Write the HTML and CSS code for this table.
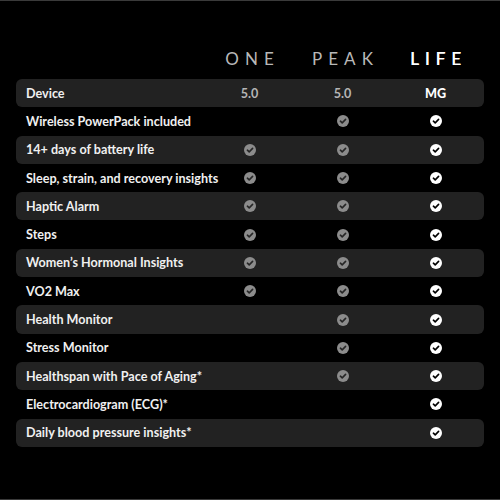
FILE: index.html
```html
<!DOCTYPE html>
<html>
<head>
<meta charset="utf-8">
<link rel="stylesheet" href="styles.css">
</head>
<body>
<div class="page">
  <div class="head">
    <div></div>
    <div class="brand">ONE</div>
    <div class="brand">PEAK</div>
    <div class="brand life">LIFE</div>
  </div>
  <div class="table">
    <div class="row shade"><div class="label">Device</div><div class="val">5.0</div><div class="val">5.0</div><div class="val mg">MG</div></div>
    <div class="row"><div class="label">Wireless PowerPack included</div><div class="cell"></div><div class="cell"><svg class="ck g" viewBox="0 0 12 12"><circle cx="6" cy="6" r="6"/><path d="M3.4 6.2 L5.2 7.9 L8.6 4.4"/></svg></div><div class="cell"><svg class="ck w" viewBox="0 0 12 12"><circle cx="6" cy="6" r="6"/><path d="M3.4 6.2 L5.2 7.9 L8.6 4.4"/></svg></div></div>
    <div class="row shade"><div class="label">14+ days of battery life</div><div class="cell"><svg class="ck g" viewBox="0 0 12 12"><circle cx="6" cy="6" r="6"/><path d="M3.4 6.2 L5.2 7.9 L8.6 4.4"/></svg></div><div class="cell"><svg class="ck g" viewBox="0 0 12 12"><circle cx="6" cy="6" r="6"/><path d="M3.4 6.2 L5.2 7.9 L8.6 4.4"/></svg></div><div class="cell"><svg class="ck w" viewBox="0 0 12 12"><circle cx="6" cy="6" r="6"/><path d="M3.4 6.2 L5.2 7.9 L8.6 4.4"/></svg></div></div>
    <div class="row"><div class="label">Sleep, strain, and recovery insights</div><div class="cell"><svg class="ck g" viewBox="0 0 12 12"><circle cx="6" cy="6" r="6"/><path d="M3.4 6.2 L5.2 7.9 L8.6 4.4"/></svg></div><div class="cell"><svg class="ck g" viewBox="0 0 12 12"><circle cx="6" cy="6" r="6"/><path d="M3.4 6.2 L5.2 7.9 L8.6 4.4"/></svg></div><div class="cell"><svg class="ck w" viewBox="0 0 12 12"><circle cx="6" cy="6" r="6"/><path d="M3.4 6.2 L5.2 7.9 L8.6 4.4"/></svg></div></div>
    <div class="row shade"><div class="label">Haptic Alarm</div><div class="cell"><svg class="ck g" viewBox="0 0 12 12"><circle cx="6" cy="6" r="6"/><path d="M3.4 6.2 L5.2 7.9 L8.6 4.4"/></svg></div><div class="cell"><svg class="ck g" viewBox="0 0 12 12"><circle cx="6" cy="6" r="6"/><path d="M3.4 6.2 L5.2 7.9 L8.6 4.4"/></svg></div><div class="cell"><svg class="ck w" viewBox="0 0 12 12"><circle cx="6" cy="6" r="6"/><path d="M3.4 6.2 L5.2 7.9 L8.6 4.4"/></svg></div></div>
    <div class="row"><div class="label">Steps</div><div class="cell"><svg class="ck g" viewBox="0 0 12 12"><circle cx="6" cy="6" r="6"/><path d="M3.4 6.2 L5.2 7.9 L8.6 4.4"/></svg></div><div class="cell"><svg class="ck g" viewBox="0 0 12 12"><circle cx="6" cy="6" r="6"/><path d="M3.4 6.2 L5.2 7.9 L8.6 4.4"/></svg></div><div class="cell"><svg class="ck w" viewBox="0 0 12 12"><circle cx="6" cy="6" r="6"/><path d="M3.4 6.2 L5.2 7.9 L8.6 4.4"/></svg></div></div>
    <div class="row shade"><div class="label">Women’s Hormonal Insights</div><div class="cell"><svg class="ck g" viewBox="0 0 12 12"><circle cx="6" cy="6" r="6"/><path d="M3.4 6.2 L5.2 7.9 L8.6 4.4"/></svg></div><div class="cell"><svg class="ck g" viewBox="0 0 12 12"><circle cx="6" cy="6" r="6"/><path d="M3.4 6.2 L5.2 7.9 L8.6 4.4"/></svg></div><div class="cell"><svg class="ck w" viewBox="0 0 12 12"><circle cx="6" cy="6" r="6"/><path d="M3.4 6.2 L5.2 7.9 L8.6 4.4"/></svg></div></div>
    <div class="row"><div class="label">VO2 Max</div><div class="cell"><svg class="ck g" viewBox="0 0 12 12"><circle cx="6" cy="6" r="6"/><path d="M3.4 6.2 L5.2 7.9 L8.6 4.4"/></svg></div><div class="cell"><svg class="ck g" viewBox="0 0 12 12"><circle cx="6" cy="6" r="6"/><path d="M3.4 6.2 L5.2 7.9 L8.6 4.4"/></svg></div><div class="cell"><svg class="ck w" viewBox="0 0 12 12"><circle cx="6" cy="6" r="6"/><path d="M3.4 6.2 L5.2 7.9 L8.6 4.4"/></svg></div></div>
    <div class="row shade"><div class="label">Health Monitor</div><div class="cell"></div><div class="cell"><svg class="ck g" viewBox="0 0 12 12"><circle cx="6" cy="6" r="6"/><path d="M3.4 6.2 L5.2 7.9 L8.6 4.4"/></svg></div><div class="cell"><svg class="ck w" viewBox="0 0 12 12"><circle cx="6" cy="6" r="6"/><path d="M3.4 6.2 L5.2 7.9 L8.6 4.4"/></svg></div></div>
    <div class="row"><div class="label">Stress Monitor</div><div class="cell"></div><div class="cell"><svg class="ck g" viewBox="0 0 12 12"><circle cx="6" cy="6" r="6"/><path d="M3.4 6.2 L5.2 7.9 L8.6 4.4"/></svg></div><div class="cell"><svg class="ck w" viewBox="0 0 12 12"><circle cx="6" cy="6" r="6"/><path d="M3.4 6.2 L5.2 7.9 L8.6 4.4"/></svg></div></div>
    <div class="row shade"><div class="label">Healthspan with Pace of Aging*</div><div class="cell"></div><div class="cell"><svg class="ck g" viewBox="0 0 12 12"><circle cx="6" cy="6" r="6"/><path d="M3.4 6.2 L5.2 7.9 L8.6 4.4"/></svg></div><div class="cell"><svg class="ck w" viewBox="0 0 12 12"><circle cx="6" cy="6" r="6"/><path d="M3.4 6.2 L5.2 7.9 L8.6 4.4"/></svg></div></div>
    <div class="row"><div class="label">Electrocardiogram (ECG)*</div><div class="cell"></div><div class="cell"></div><div class="cell"><svg class="ck w" viewBox="0 0 12 12"><circle cx="6" cy="6" r="6"/><path d="M3.4 6.2 L5.2 7.9 L8.6 4.4"/></svg></div></div>
    <div class="row shade"><div class="label">Daily blood pressure insights*</div><div class="cell"></div><div class="cell"></div><div class="cell"><svg class="ck w" viewBox="0 0 12 12"><circle cx="6" cy="6" r="6"/><path d="M3.4 6.2 L5.2 7.9 L8.6 4.4"/></svg></div></div>
  </div>
</div>
</body>
</html>
```
FILE: styles.css
```css
html, body {
  margin: 0;
  padding: 0;
  background: #000;
}
.page {
  width: 500px;
  height: 500px;
  box-sizing: border-box;
  border-top: 1px solid #3a3a3a;
  border-bottom: 1px solid #3a3a3a;
  background: #000;
  padding: 48px 16px 0 16px;
  font-family: "Lato", "Liberation Sans", sans-serif;
}
.head, .row {
  display: grid;
  grid-template-columns: 187px 93px 93px 93px;
}
.head {
  height: 30px;
}
.brand {
  text-align: center;
  font-size: 17px;
  line-height: 20px;
  letter-spacing: 6px;
  padding-left: 6px;
  color: #b8b8b8;
  font-weight: 400;
}
.brand.life {
  color: #fff;
  font-weight: 400;
  text-shadow: 0.4px 0 0 #fff;
}
.table {
  display: flex;
  flex-direction: column;
}
.row {
  height: 28.3px;
  align-items: center;
  border-radius: 6px;
}
.row.shade {
  background: #222;
}
.label {
  padding-left: 10px;
  color: #f0f0f0;
  font-size: 12.6px;
  font-weight: 700;
  white-space: nowrap;
}
.val {
  text-align: center;
  color: #b5b5b5;
  font-size: 12.6px;
  font-weight: 700;
}
.val.mg {
  color: #fff;
  font-weight: 900;
}
.cell {
  display: flex;
  justify-content: center;
  align-items: center;
}
.ck {
  width: 12px;
  height: 12px;
  display: block;
}
.ck path {
  fill: none;
  stroke-width: 1.6;
  stroke-linecap: round;
  stroke-linejoin: round;
}
.ck.g circle { fill: #8c8c8c; }
.ck.g path { stroke: #262626; }
.ck.w circle { fill: #fff; }
.ck.w path { stroke: #000; }
```
